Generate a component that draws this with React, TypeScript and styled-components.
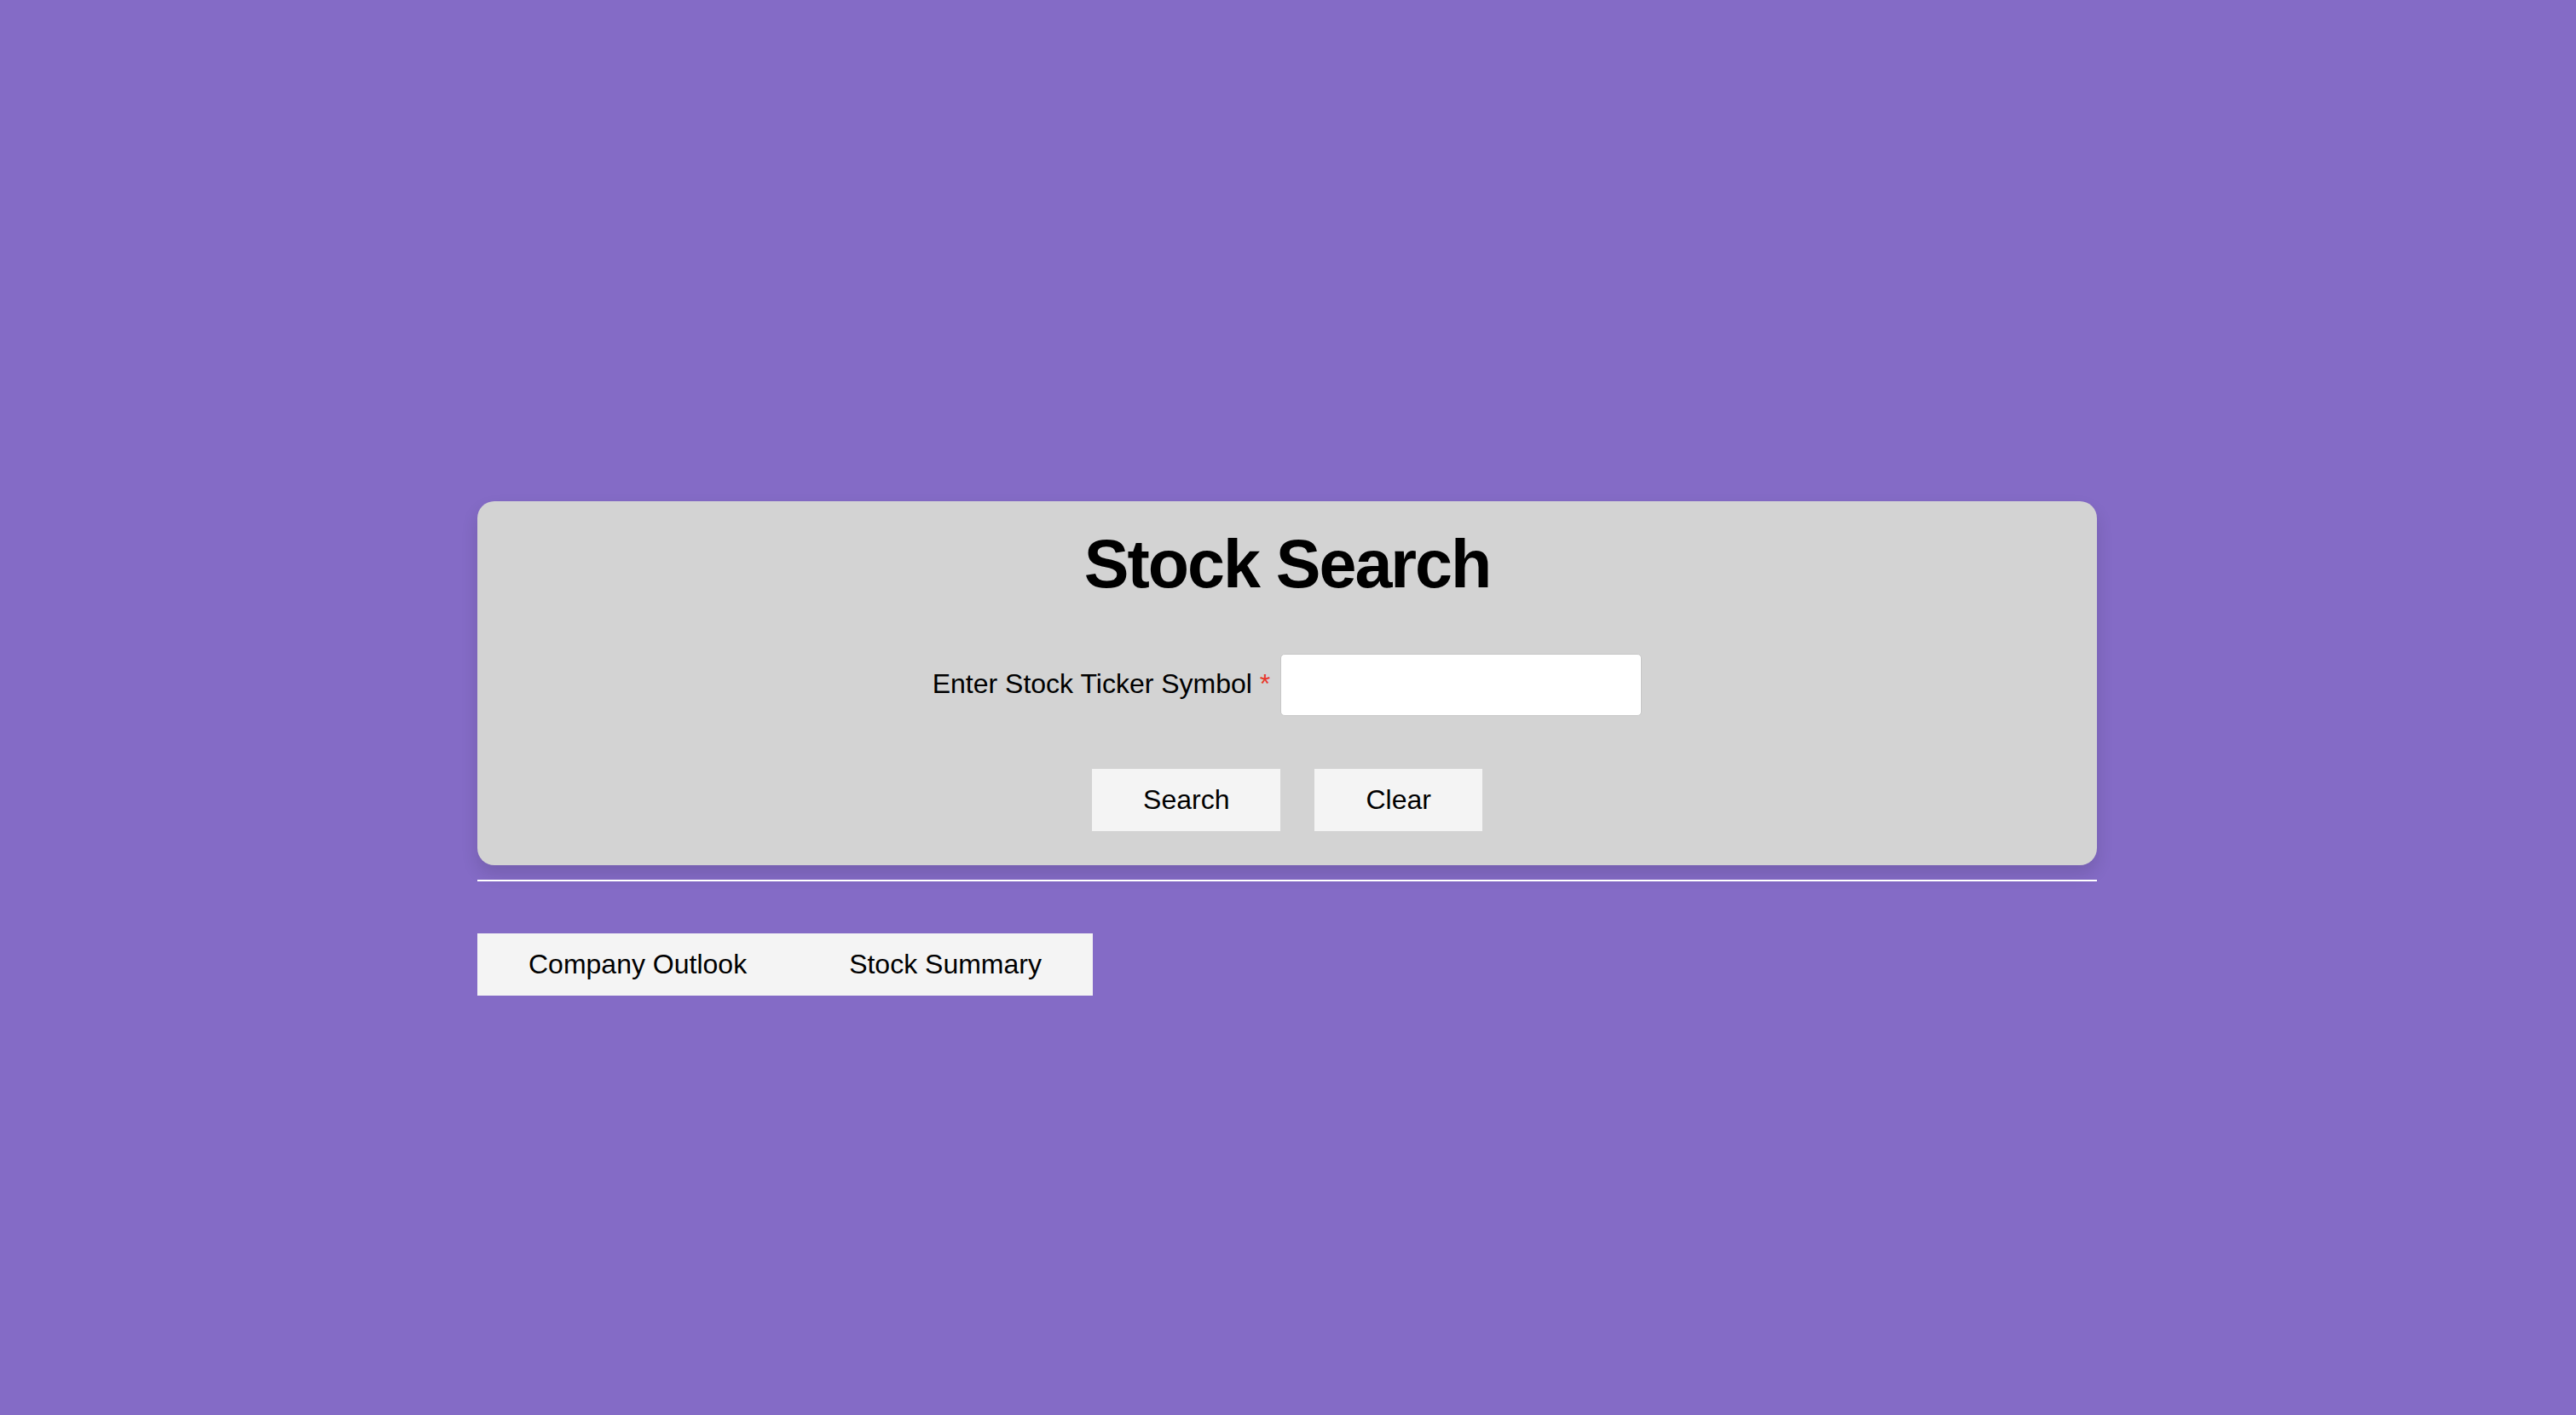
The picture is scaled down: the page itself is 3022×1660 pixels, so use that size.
import styled, { createGlobalStyle } from "styled-components";

//styles
const GlobalStyle = createGlobalStyle`
  html, body {
    margin: 0;
    padding: 0;
    background: #846bc6;
    font-family: "Liberation Sans", Arial, Helvetica, sans-serif;
    color: #000;
  }
`;
const Page = styled.div`
  min-height: 1660px;
  padding-top: 588px;
  box-sizing: border-box;
`;
const Container = styled.div`
  width: 1900px;
  margin-left: calc(50% - 951px);
`;
const Card = styled.form`
  background: #d3d3d3;
  border-radius: 20px;
  padding: 28px 0 40px;
  box-shadow: 0 10px 20px rgba(0, 0, 0, 0.12);
  display: flex;
  flex-direction: column;
  align-items: center;
`;
const Title = styled.h1`
  margin: 0;
  font-size: 79px;
  font-weight: 700;
  letter-spacing: -2px;
  line-height: normal;
`;
const Row = styled.div`
  display: flex;
  align-items: center;
  margin-top: 59px;
`;
const Label = styled.label`
  font-size: 32px;
  line-height: normal;
  margin-bottom: 3px;
`;
const Required = styled.span`
  color: #e8372a;
`;
const Input = styled.input`
  width: 424px;
  height: 73px;
  box-sizing: border-box;
  margin-left: 12px;
  background: #fff;
  border: 1px solid #c6c6c6;
  border-radius: 5px;
  font-size: 32px;
  outline: none;
`;
const Buttons = styled.div`
  display: flex;
  gap: 40px;
  margin-top: 62px;
`;
const Button = styled.button`
  height: 73px;
  padding: 0 60px;
  border: none;
  background: #f4f4f4;
  font-family: inherit;
  font-size: 32px;
  color: #000;
  cursor: pointer;
`;
const Divider = styled.hr`
  margin: 17px 0 0;
  border: none;
  height: 2px;
  background: #fff;
`;
const Tabs = styled.div`
  display: inline-flex;
  margin-top: 61px;
  background: #f4f4f4;
`;
const Tab = styled.button`
  height: 73px;
  padding: 0 60px;
  border: none;
  background: transparent;
  font-family: inherit;
  font-size: 32px;
  color: #000;
  cursor: pointer;
`;

const App = () => {
  return (
    <Page>
      <GlobalStyle />
      <Container>
        <Card onSubmit={(e) => e.preventDefault()}>
          <Title>Stock Search</Title>
          <Row>
            <Label htmlFor="ticker">
              Enter Stock Ticker Symbol <Required>*</Required>
            </Label>
            <Input id="ticker" type="text" />
          </Row>
          <Buttons>
            <Button type="submit">Search</Button>
            <Button type="reset">Clear</Button>
          </Buttons>
        </Card>
        <Divider />
        <Tabs>
          <Tab>Company Outlook</Tab>
          <Tab>Stock Summary</Tab>
        </Tabs>
      </Container>
    </Page>
  );
};

export default App;
